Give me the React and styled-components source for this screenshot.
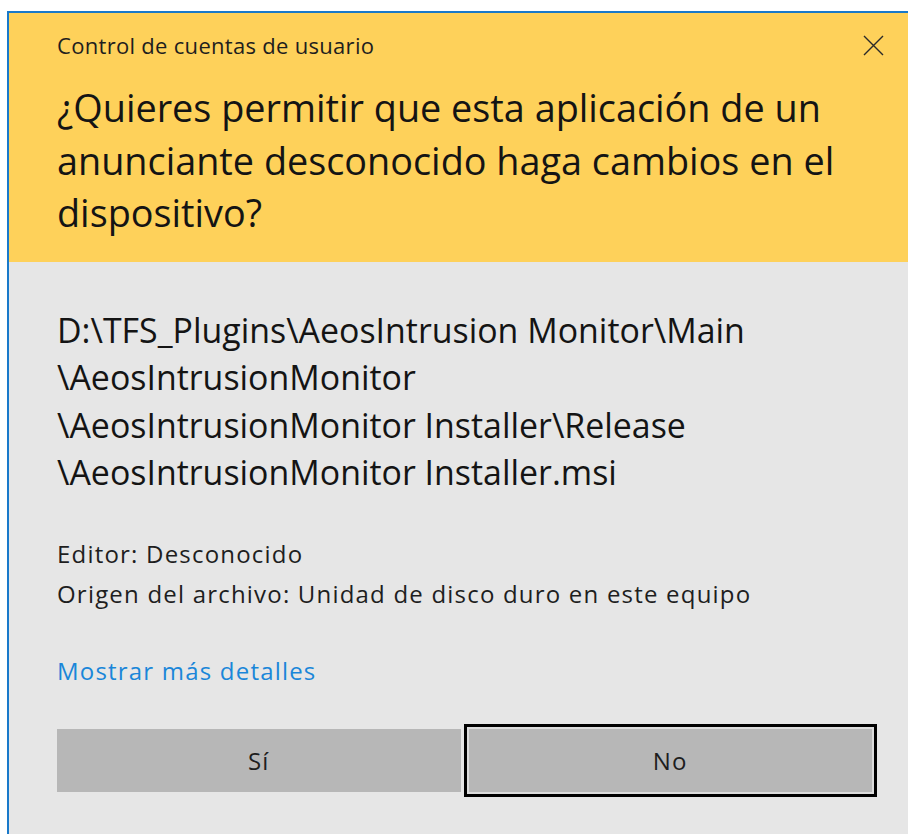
import React from "react";
import styled, { createGlobalStyle } from "styled-components";

const Global = createGlobalStyle`
  html, body {
    margin: 0;
    padding: 0;
    background: #ffffff;
    overflow: hidden;
  }
  body {
    font-family: "Open Sans", "Noto Sans", "Liberation Sans", sans-serif;
    color: #1b1b1b;
  }
`;

/* The window runs off the right and bottom of the screen, so only its
   top and left frame edges are visible. */
const Dialog = styled.div`
  box-sizing: border-box;
  margin: 11px 0 0 7px;
  width: calc(100vw - 7px);
  min-height: calc(100vh - 11px);
  border-top: 2px solid #1979ca;
  border-left: 2px solid #1979ca;
  background: #e6e6e6;
  display: flex;
  flex-direction: column;
`;

const Header = styled.header`
  background: #fed15a;
  padding: 20px 0 22px 48px;
  display: flex;
  flex-direction: column;
`;

const TitleBar = styled.div`
  width: 827px;
  display: flex;
  align-items: center;
  justify-content: space-between;
`;

const Caption = styled.span`
  font-size: 22px;
  line-height: 24px;
  letter-spacing: 0.3px;
  color: #1e1e1e;
`;

const CloseButton = styled.button`
  width: 22px;
  height: 22px;
  padding: 0;
  border: none;
  background: transparent;
  display: flex;
  align-items: center;
  justify-content: center;
`;

const Question = styled.h1`
  margin: 25px 0 0;
  font-weight: 400;
  font-size: 37.8px;
  line-height: 52.5px;
  color: #141414;
`;

const Body = styled.main`
  padding: 45px 0 0 48px;
  display: flex;
  flex-direction: column;
`;

const Program = styled.div`
  font-size: 33.9px;
  line-height: 47.5px;
  color: #141414;
`;

const Details = styled.div`
  margin-top: 37px;
  font-size: 24px;
  line-height: 40px;
  letter-spacing: 1.2px;
  color: #1e1e1e;
`;

const MoreLink = styled.a`
  margin-top: 37px;
  font-size: 24px;
  line-height: 40px;
  letter-spacing: 1.2px;
  color: #1a86d9;
  text-decoration: none;
  align-self: flex-start;
  cursor: pointer;
`;

const Buttons = styled.div`
  margin-top: 38px;
  width: 815px;
  display: grid;
  grid-template-columns: 1fr 1fr;
  gap: 8px;
`;

const Choice = styled.button`
  height: 63px;
  border: none;
  background: #b7b7b7;
  font-family: inherit;
  font-size: 24px;
  letter-spacing: 1.2px;
  color: #1e1e1e;
  padding: 0;
  box-shadow: ${(p) =>
    p.$focused ? "0 0 0 2px #dcdcdc, 0 0 0 5px #000000" : "none"};
`;

function CloseIcon() {
  return (
    <svg width="21" height="21" viewBox="0 0 21 21">
      <path
        d="M1 1 L20 20 M20 1 L1 20"
        stroke="#2a2a2a"
        strokeWidth="1.4"
        fill="none"
      />
    </svg>
  );
}

export default function App() {
  return (
    <>
      <Global />
      <Dialog>
        <Header>
          <TitleBar>
            <Caption>Control de cuentas de usuario</Caption>
            <CloseButton aria-label="Cerrar">
              <CloseIcon />
            </CloseButton>
          </TitleBar>
          <Question>
            ¿Quieres permitir que esta aplicación de un
            <br />
            anunciante desconocido haga cambios en el
            <br />
            dispositivo?
          </Question>
        </Header>
        <Body>
          <Program>
            D:\TFS_Plugins\AeosIntrusion Monitor\Main
            <br />
            \AeosIntrusionMonitor
            <br />
            \AeosIntrusionMonitor Installer\Release
            <br />
            \AeosIntrusionMonitor Installer.msi
          </Program>
          <Details>
            Editor: Desconocido
            <br />
            Origen del archivo: Unidad de disco duro en este equipo
          </Details>
          <MoreLink>Mostrar más detalles</MoreLink>
          <Buttons>
            <Choice>Sí</Choice>
            <Choice $focused>No</Choice>
          </Buttons>
        </Body>
      </Dialog>
    </>
  );
}
